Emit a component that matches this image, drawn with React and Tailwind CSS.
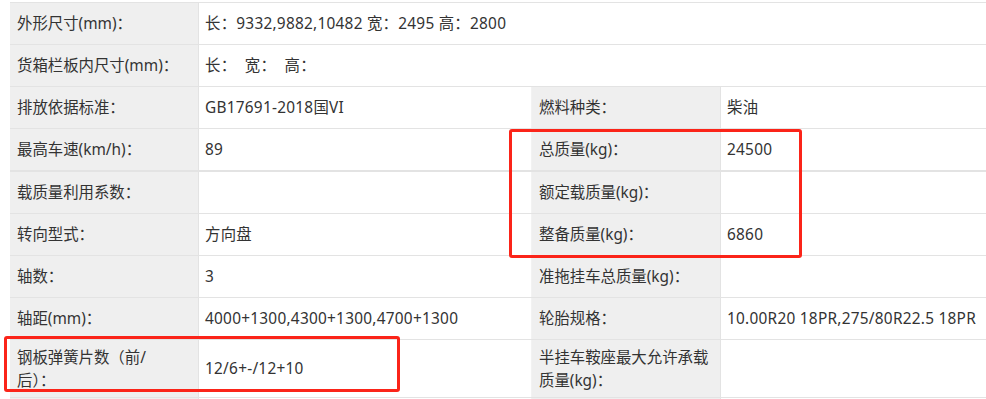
import React from 'react';

const rows = [
  { label: '外形尺寸(mm)：', value: '长：9332,9882,10482 宽：2495 高：2800', wide: true },
  { label: '货箱栏板内尺寸(mm)：', value: '长：  宽：  高：', wide: true },
  { label: '排放依据标准：', value: 'GB17691-2018国VI', label2: '燃料种类：', value2: '柴油' },
  { label: '最高车速(km/h)：', value: '89', label2: '总质量(kg)：', value2: '24500', thick: true },
  { label: '载质量利用系数：', value: '', label2: '额定载质量(kg)：', value2: '' },
  { label: '转向型式：', value: '方向盘', label2: '整备质量(kg)：', value2: '6860' },
  { label: '轴数：', value: '3', label2: '准拖挂车总质量(kg)：', value2: '' },
  { label: '轴距(mm)：', value: '4000+1300,4300+1300,4700+1300', label2: '轮胎规格：', value2: '10.00R20 18PR,275/80R22.5 18PR' },
  {
    label: <>钢板弹簧片数（前/<br />后）：</>,
    value: '12/6+-/12+10',
    label2: <>半挂车鞍座最大允许承载<br />质量(kg)：</>,
    value2: '',
    tall: true,
  },
  { label: '', value: '', label2: '', value2: '' },
];

const Label = ({ children, tall }) => (
  <div className={`flex items-center bg-[#efefef] border-r border-[#e3e3e3] px-[7px] ${tall ? 'py-[5px]' : ''}`}>
    <span className="whitespace-pre">{children}</span>
  </div>
);

const Value = ({ children, span, last }) => (
  <div className={`flex items-center px-[6px] bg-white tracking-[0.25px] ${span ? 'col-span-3' : ''} ${last ? '' : 'border-r border-[#f2f2f2]'}`}>
    <span className="whitespace-pre">{children}</span>
  </div>
);

export default function App() {
  return (
    <div className="relative w-[986px] h-[399px] overflow-hidden bg-white pt-[2px] font-['Noto_Sans','Noto_Sans_CJK_SC',sans-serif] text-[15.4px] leading-[23px] text-[#333333]">
      <div className="ml-[10px] border-t border-[#e3e3e3]">
        {rows.map((r, i) => (
          <div
            key={i}
            className={`grid grid-cols-[189px_333px_189px_1fr] ${r.tall ? 'min-h-[58px]' : r.thick ? 'min-h-[43px]' : 'min-h-[42px]'} ${r.thick ? 'border-b-2' : 'border-b'} border-[#e3e3e3]`}
          >
            <Label tall={r.tall}>{r.label}</Label>
            {r.wide ? (
              <Value span last>{r.value}</Value>
            ) : (
              <>
                <Value>{r.value}</Value>
                <Label tall={r.tall}>{r.label2}</Label>
                <Value last>{r.value2}</Value>
              </>
            )}
          </div>
        ))}
      </div>

      {/* highlight boxes */}
      <div className="absolute left-[509px] top-[129px] w-[293px] h-[129px] border-[3px] border-[#fb2419] rounded-[3px]" />
      <div className="absolute left-[4px] top-[336px] w-[396px] h-[56px] border-[3px] border-[#fb2419] rounded-[3px]" />
    </div>
  );
}
